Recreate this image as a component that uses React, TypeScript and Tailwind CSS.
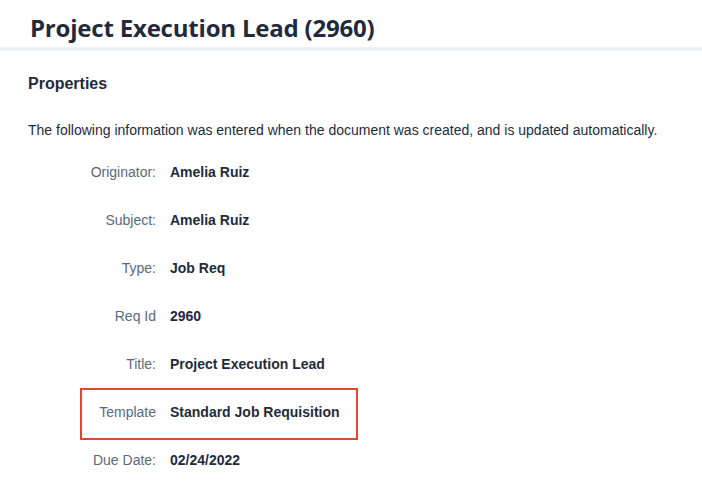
import React from 'react';

const rows = [
  { label: 'Originator:', value: 'Amelia Ruiz' },
  { label: 'Subject:', value: 'Amelia Ruiz' },
  { label: 'Type:', value: 'Job Req' },
  { label: 'Req Id', value: '2960' },
  { label: 'Title:', value: 'Project Execution Lead' },
  { label: 'Template', value: 'Standard Job Requisition', highlight: true },
  { label: 'Due Date:', value: '02/24/2022' },
];

const App = () => {
  return (
    <div className="w-[702px] h-[490px] overflow-hidden bg-white" style={{ fontFamily: '"Liberation Sans", Arial, sans-serif' }}>

      {/* Header */}
      <div className="h-[51px] border-b-4 border-[#eef2f8] px-[30px] flex items-center">
        <h1 className="text-[24px] font-bold text-[#1f2b3c] leading-none pt-[8px] tracking-[-0.2px]" style={{ fontFamily: '"Open Sans", sans-serif' }}>
          Project Execution Lead (2960)
        </h1>
      </div>

      {/* Properties */}
      <div className="px-[28px]">
        <h2 className="mt-[23px] text-[16px] font-bold text-[#1f2b3c] leading-[20px]">Properties</h2>
        <p className="mt-[27px] text-[14px] text-[#1f2b3c] leading-[18px]">
          The following information was entered when the document was created, and is updated automatically.
        </p>

        <div className="mt-[9px] flex flex-col">
          {rows.map((row) => (
            <div key={row.label} className="relative h-[48px] flex items-center gap-[14px] text-[14px]">
              <span className="w-[128px] text-right text-[#5a6a80]">{row.label}</span>
              <span className="font-bold text-[#1f2b3c]">{row.value}</span>
              {row.highlight && (
                <span className="absolute left-[52px] top-0 w-[278px] h-[52px] border-2 border-[#e5452e] pointer-events-none" />
              )}
            </div>
          ))}
        </div>
      </div>

    </div>
  );
};

export default App;
